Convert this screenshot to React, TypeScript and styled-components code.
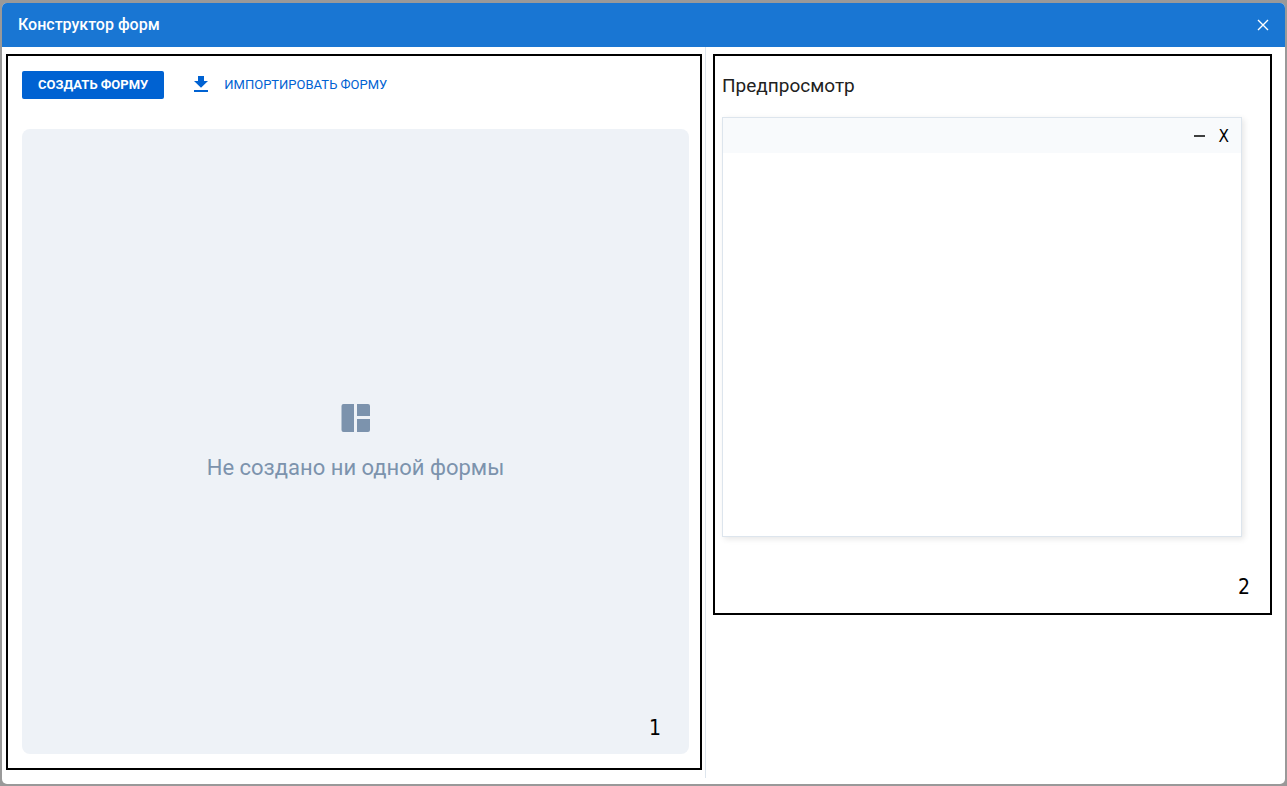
import React from "react";
import styled, { createGlobalStyle } from "styled-components";

const GlobalStyle = createGlobalStyle`
  *, *::before, *::after { box-sizing: border-box; }
  body {
    margin: 0;
    background: #999999;
    font-family: Roboto, "Liberation Sans", sans-serif;
    color: #212121;
  }
  h1, h2, p { margin: 0; }
  button { font: inherit; border: 0; padding: 0; background: none; cursor: pointer; }
`;

const Page = styled.div`
  display: flex;
  min-height: 100vh;
  padding: 3px 2px 2px;
`;

const Dialog = styled.section`
  flex: 1;
  display: flex;
  flex-direction: column;
  background: #ffffff;
  border-radius: 5px;
  overflow: hidden;
`;

const Header = styled.header`
  display: flex;
  align-items: center;
  justify-content: space-between;
  height: 44px;
  padding: 0 16px;
  background: #1976d3;
  color: #ffffff;
`;

const Title = styled.h1`
  font-size: 16px;
  line-height: 24px;
  font-weight: 500;
`;

const CloseButton = styled.button`
  display: flex;
  color: inherit;
`;

const Body = styled.div`
  flex: 1;
  display: grid;
  grid-template-columns: 704fr 579fr;
  padding-bottom: 6px;
`;

const FormsColumn = styled.div`
  display: flex;
  padding: 7px 3px 8px 4px;
  border-right: 1px solid #dde5ed;
`;

const PreviewColumn = styled.div`
  padding: 7px 13px 8px 7px;
`;

const Frame = styled.section<{ $pad: string }>`
  position: relative;
  flex: 1;
  display: flex;
  flex-direction: column;
  border: 2px solid #000000;
  padding: ${(p) => p.$pad};
`;

const FrameNumber = styled.span<{ $right: number; $bottom: number }>`
  position: absolute;
  right: ${(p) => p.$right}px;
  bottom: ${(p) => p.$bottom}px;
  font-family: "DejaVu Sans Condensed", "DejaVu Sans", sans-serif;
  font-size: 21px;
  line-height: 24px;
  color: #000000;
`;

const Toolbar = styled.div`
  display: flex;
  gap: 27px;
  margin-bottom: 30px;
`;

const ActionButton = styled.button<{ $primary?: boolean }>`
  display: flex;
  align-items: center;
  justify-content: center;
  gap: 13px;
  height: 28px;
  padding: ${(p) => (p.$primary ? "0 16px" : "0")};
  border-radius: 2px;
  background: ${(p) => (p.$primary ? "#0062d2" : "transparent")};
  color: ${(p) => (p.$primary ? "#ffffff" : "#0062d2")};
  font-size: 13px;
  line-height: 20px;
  font-weight: ${(p) => (p.$primary ? 700 : 400)};
  text-transform: uppercase;
  white-space: nowrap;
`;

const EmptyState = styled.div`
  flex: 1;
  display: flex;
  flex-direction: column;
  align-items: center;
  justify-content: center;
  gap: 19px;
  padding-top: 3px;
  border-radius: 8px;
  background: #eef2f7;
  color: #7c93ad;
`;

const EmptyText = styled.p`
  font-size: 22px;
  line-height: 32px;
`;

const PreviewTitle = styled.h2`
  font-size: 19px;
  line-height: 28px;
  font-weight: 400;
  margin-bottom: 17px;
`;

const PreviewWindow = styled.div`
  height: 420px;
  border: 1px solid #dde5ed;
  background: #ffffff;
  box-shadow: 2px 2px 6px rgba(0, 0, 0, 0.1);
`;

const PreviewBar = styled.div`
  display: flex;
  align-items: center;
  justify-content: flex-end;
  gap: 14px;
  height: 35px;
  padding-right: 12px;
  background: #f8fafc;
`;

const WindowButton = styled.button`
  display: flex;
  color: #000000;
  font-family: "DejaVu Sans Condensed", "DejaVu Sans", sans-serif;
  font-size: 17px;
  line-height: 24px;
`;

export default function App() {
  return (
    <Page>
      <GlobalStyle />
      <Dialog role="dialog" aria-labelledby="dialog-title">
        <Header>
          <Title id="dialog-title">Конструктор форм</Title>
          <CloseButton type="button" aria-label="Закрыть">
            <svg width="12" height="12" viewBox="0 0 12 12" fill="none" stroke="currentColor" strokeWidth="1.4">
              <path d="M1 1l10 10M11 1L1 11" />
            </svg>
          </CloseButton>
        </Header>
        <Body>
          <FormsColumn>
            <Frame $pad="15px 11px 14px 14px">
              <Toolbar>
                <ActionButton type="button" $primary>Создать форму</ActionButton>
                <ActionButton type="button">
                  <svg width="20" height="20" viewBox="0 0 20 20" fill="currentColor" aria-hidden="true">
                    <path d="M7 1h6v5h4l-7 6.800L3 6h4zM3 15h14v2H3z" />
                  </svg>
                  Импортировать форму
                </ActionButton>
              </Toolbar>
              <EmptyState>
                <svg width="30" height="30" viewBox="0 0 30 30" fill="currentColor" aria-hidden="true">
                  <path d="M2.500 1H13v28H2.500a2 2 0 0 1-2-2V3a2 2 0 0 1 2-2zM16 1h11a2 2 0 0 1 2 2v10H16zM16 16h13v11a2 2 0 0 1-2 2H16z" />
                </svg>
                <EmptyText>Не создано ни одной формы</EmptyText>
              </EmptyState>
              <FrameNumber $right={39} $bottom={28}>1</FrameNumber>
            </Frame>
          </FormsColumn>
          <PreviewColumn>
            <Frame $pad="16px 28px 76px 7px">
              <PreviewTitle>Предпросмотр</PreviewTitle>
              <PreviewWindow>
                <PreviewBar>
                  <WindowButton type="button" aria-label="Свернуть">
                    <svg width="11" height="12" viewBox="0 0 11 12" aria-hidden="true">
                      <path d="M0 6h11" stroke="currentColor" strokeWidth="1.500" />
                    </svg>
                  </WindowButton>
                  <WindowButton type="button" aria-label="Закрыть предпросмотр">X</WindowButton>
                </PreviewBar>
              </PreviewWindow>
              <FrameNumber $right={20} $bottom={14}>2</FrameNumber>
            </Frame>
          </PreviewColumn>
        </Body>
      </Dialog>
    </Page>
  );
}
